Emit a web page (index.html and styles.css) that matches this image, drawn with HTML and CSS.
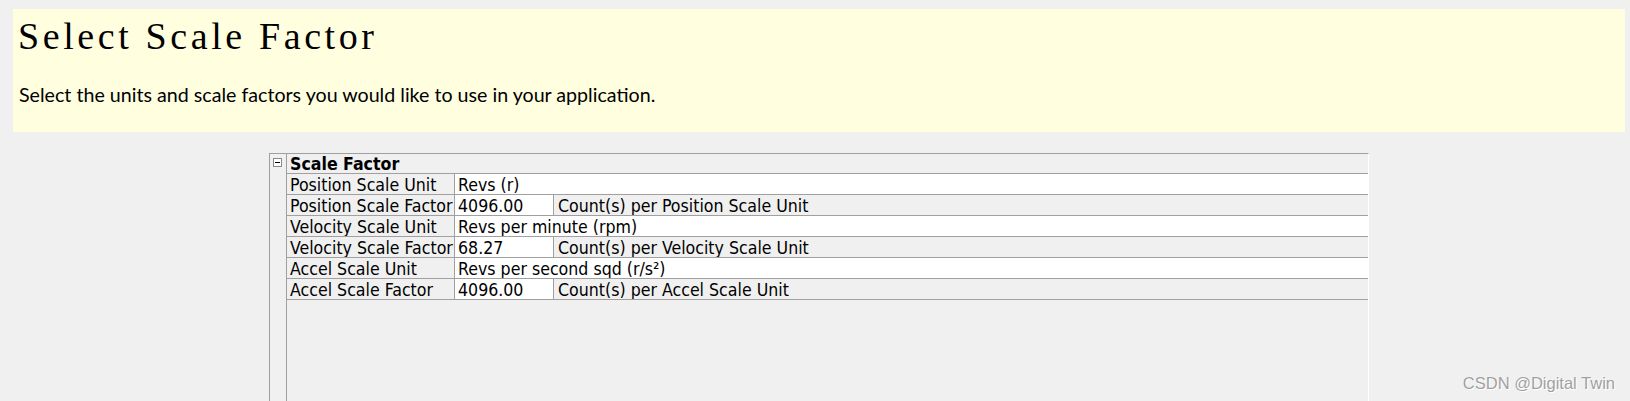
FILE: index.html
```html
<!DOCTYPE html>
<html>
<head>
<meta charset="utf-8">
<title>Select Scale Factor</title>
<link rel="stylesheet" href="styles.css">
</head>
<body>
<div class="banner">
  <h1 class="title">Select Scale Factor</h1>
  <p class="lead">Select the units and scale factors you would like to use in your application.</p>
</div>
<div class="grid">
  <div class="gutter"><span class="toggle"></span></div>
  <div class="body">
    <div class="cat">Scale Factor</div>
    <div class="row"><div class="label">Position Scale Unit</div><div class="value wide">Revs (r)</div></div>
    <div class="row"><div class="label">Position Scale Factor</div><div class="value">4096.00</div><div class="desc">Count(s) per Position Scale Unit</div></div>
    <div class="row"><div class="label">Velocity Scale Unit</div><div class="value wide">Revs per minute (rpm)</div></div>
    <div class="row"><div class="label">Velocity Scale Factor</div><div class="value">68.27</div><div class="desc">Count(s) per Velocity Scale Unit</div></div>
    <div class="row"><div class="label">Accel Scale Unit</div><div class="value wide">Revs per second sqd (r/s²)</div></div>
    <div class="row"><div class="label">Accel Scale Factor</div><div class="value">4096.00</div><div class="desc">Count(s) per Accel Scale Unit</div></div>
  </div>
</div>
<div class="watermark">CSDN @Digital Twin</div>
</body>
</html>
```
FILE: styles.css
```css
* { box-sizing: border-box; }
html, body { margin: 0; padding: 0; }
body {
  background: #f0f0f0;
  height: 401px;
  overflow: hidden;
  position: relative;
  color: #000;
}
.banner {
  margin: 9px 5px 0 13px;
  height: 123px;
  padding: 8px 5px 0 5px;
  background: #ffffe0;
}
.title {
  margin: 0;
  font-family: "Liberation Serif", serif;
  font-weight: 400;
  font-size: 38px;
  line-height: 38px;
  letter-spacing: 3.6px;
}
.lead {
  margin: 28px 0 0 1px;
  font-family: Lato, "Noto Sans", sans-serif;
  font-size: 19.65px;
  line-height: 24px;
}
.grid {
  margin: 21px 0 0 269px;
  width: 1100px;
  height: 260px;
  display: flex;
  border-top: 1px solid #a0a0a0;
  border-left: 1px solid #a0a0a0;
  border-right: 1px solid #ffffff;
  font-family: "DejaVu Sans Condensed", "DejaVu Sans", sans-serif;
  font-stretch: condensed;
  font-size: 17.6px;
}
.gutter {
  width: 17px;
  border-right: 1px solid #a0a0a0;
  padding: 4px 0 0 3px;
}
.toggle {
  display: block;
  width: 9px;
  height: 9px;
  border: 1px solid #8a8a8a;
  background: #fff;
  position: relative;
}
.toggle::after {
  content: "";
  position: absolute;
  left: 1px;
  top: 3px;
  width: 5px;
  height: 1px;
  background: #000;
}
.body { flex: 1; }
.cat {
  height: 20px;
  padding: 2px 0 0 3px;
  line-height: 17px;
  font-weight: bold;
  border-bottom: 1px solid #a0a0a0;
}
.row {
  display: flex;
  height: 21px;
  border-bottom: 1px solid #a0a0a0;
}
.label, .value, .desc {
  padding: 3px 0 0 3px;
  line-height: 17px;
  white-space: nowrap;
  overflow: hidden;
}
.label {
  width: 168px;
  border-right: 1px solid #a0a0a0;
}
.value {
  width: 99px;
  background: #fff;
  border-right: 1px solid #a0a0a0;
}
.value.wide {
  flex: 1;
  width: auto;
  border-right: none;
}
.desc {
  flex: 1;
  padding-left: 4px;
}
.watermark {
  position: absolute;
  right: 15px;
  top: 375px;
  font-family: "Liberation Sans", Arial, sans-serif;
  font-size: 16.5px;
  line-height: 16px;
  color: #a0a0a0;
  text-shadow: 0 0 1px #fff, 1px 1px 0 #fff;
}
```
